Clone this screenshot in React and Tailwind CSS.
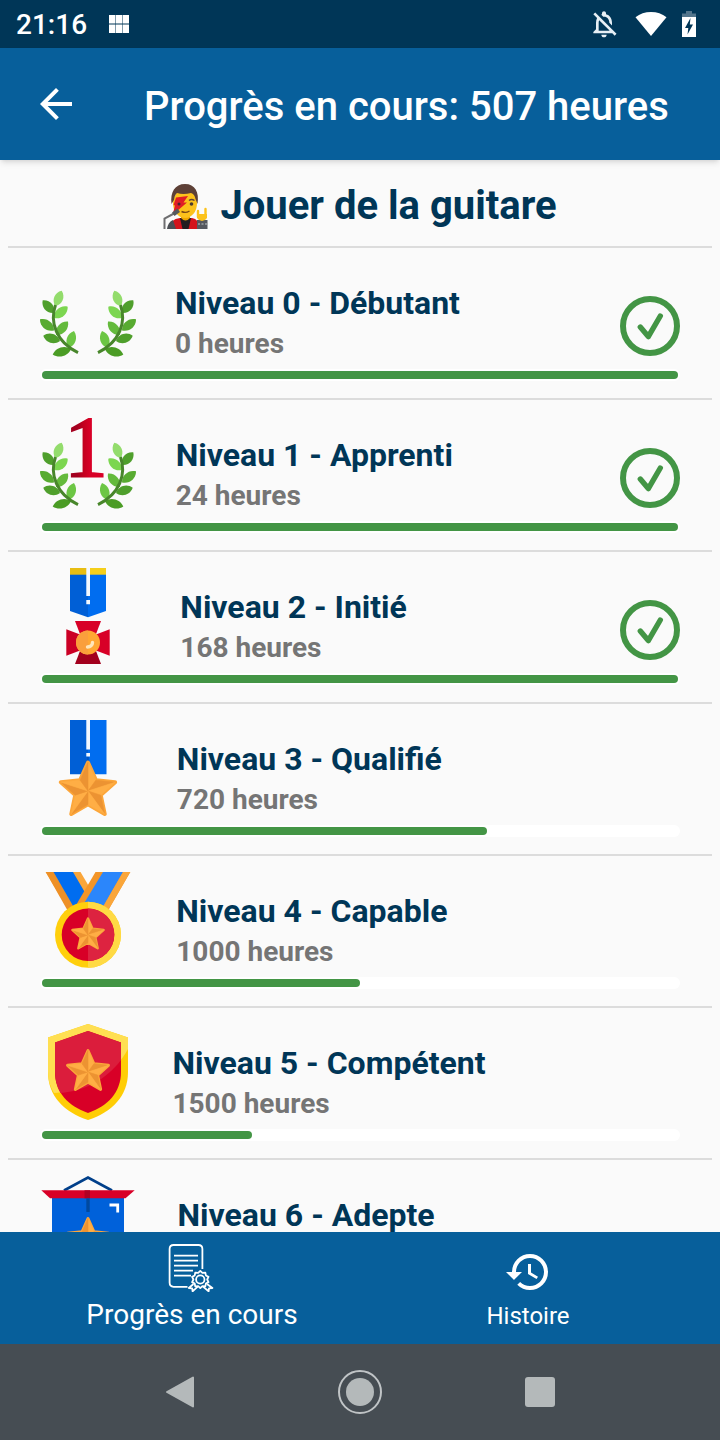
import React from "react";
import { MdArrowBack, MdHistory, MdOutlineNotificationsOff } from "react-icons/md";

const TOTAL_HOURS = 507;

const point = (cx, cy, radius, degrees) => {
  const a = ((degrees - 90) * Math.PI) / 180;
  return [cx + radius * Math.cos(a), cy + radius * Math.sin(a)];
};

function Star({ cx, cy, r }) {
  const pts = Array.from({ length: 10 }, (_, i) =>
    point(cx, cy, i % 2 === 0 ? r : r * 0.47, i * 36)
  );
  return (
    <g strokeLinejoin="round">
      <polygon points={pts.map((p) => p.join(",")).join(" ")} fill="#fca63a" stroke="#fca63a" strokeWidth={r * 0.14} />
      {pts.map((p, i) => {
        const q = pts[(i + 1) % 10];
        const color = i % 2 === 0 ? "#ffae45" : "#ec9332";
        return <polygon key={i} points={`${cx},${cy} ${p.join(",")} ${q.join(",")}`} fill={color} stroke={color} strokeWidth="0.6" />;
      })}
    </g>
  );
}

function Leaf({ base, tip, bulge = 6, color }) {
  const [bx, by] = base;
  const [tx, ty] = tip;
  const dx = tx - bx;
  const dy = ty - by;
  const len = Math.hypot(dx, dy);
  const nx = (-dy / len) * bulge;
  const ny = (dx / len) * bulge;
  const at = (t, s) => `${bx + dx * t + nx * s} ${by + dy * t + ny * s}`;
  return (
    <path
      d={`M${bx} ${by} C${at(0.25, 1)} ${at(0.75, 1)} ${tx} ${ty} C${at(0.75, -1)} ${at(0.25, -1)} ${bx} ${by}Z`}
      fill={color}
    />
  );
}

const LEAVES = [
  { tip: [21.7, 26.7], base: [15.3, 42], color: "#93dc6c" },
  { tip: [2.7, 36.3], base: [14, 49], color: "#4f9f2c" },
  { tip: [27.7, 42.7], base: [14, 54], color: "#7cd650" },
  { tip: [0, 55.3], base: [14, 66.5], color: "#58ab31" },
  { tip: [28, 57.5], base: [16, 71], color: "#64ba3c" },
  { tip: [3.3, 71.8], base: [20, 77], color: "#4f9f2c" },
  { tip: [34, 67], base: [28.5, 84], color: "#6cc644" },
  { tip: [12.7, 90.5], base: [31, 85], color: "#4b9c25" },
];

function Branch() {
  return (
    <g>
      {LEAVES.map((leaf, i) => (
        <Leaf key={i} {...leaf} />
      ))}
      <path d="M15.5 41 C9.5 58 16 78 38 88.7" fill="none" stroke="#48862b" strokeWidth="3" />
    </g>
  );
}

function Laurel() {
  return (
    <>
      <Branch />
      <g transform="translate(96 0) scale(-1 1)">
        <Branch />
      </g>
    </>
  );
}

function LaurelOne() {
  return (
    <>
      <Laurel />
      <defs>
        <linearGradient id="numeral" x1="0" x2="1" y1="0" y2="0">
          <stop offset="0.3" stopColor="#a4001f" />
          <stop offset="0.45" stopColor="#c4001f" />
          <stop offset="0.6" stopColor="#d80027" />
        </linearGradient>
      </defs>
      <text
        x="46"
        y="60"
        textAnchor="middle"
        fill="url(#numeral)"
        stroke="url(#numeral)"
        strokeWidth="2"
        className="font-['Liberation_Serif',serif] text-[87px]"
      >
        1
      </text>
    </>
  );
}

function CrossMedal() {
  return (
    <>
      <path d="M30 0H48V49.3L30 43Z" fill="#005fd6" />
      <path d="M48 0H66V43L48 49.3Z" fill="#006df0" />
      <path d="M30 0H48V6.7H30Z" fill="#e8bd12" />
      <path d="M48 0H66V6.7H48Z" fill="#f5cf1a" />
      <path d="M46.3 0H50V28H46.3ZM46.3 32H50V36.3H46.3Z" fill="#f3f8ff" />
      <path d="M35 53H61L54.5 70H41.5Z" fill="#d80027" />
      <path d="M26.3 61.3L44 68V81L26.3 87.7Z" fill="#cb0025" />
      <path d="M69.7 61.3L52 68V81L69.7 87.7Z" fill="#d80027" />
      <path d="M41.5 79H54.5L61 96H35Z" fill="#a2001d" />
      <circle cx="48" cy="74.5" r="12" fill="#ffa733" />
      <path d="M48 62.5a12 12 0 0 0 0 24Z" fill="#fa9f3c" />
      <path d="M52.5 74.5C52.5 77.2 50.3 79 47.5 79" fill="none" stroke="#ffe6ba" strokeWidth="3.4" strokeLinecap="round" />
    </>
  );
}

function StarMedal() {
  return (
    <>
      <path d="M30 0H48V54.3H30Z" fill="#005fd6" />
      <path d="M48 0H66.5V54.3H48Z" fill="#006df0" />
      <path d="M46.3 0H50V29.5H46.3ZM46.3 33H50V36.5H46.3Z" fill="#f3f8ff" />
      <path d="M48 37V44" stroke="#0053bd" strokeWidth="1.5" />
      <Star cx={48} cy={71} r={28.5} />
    </>
  );
}

function RibbonMedal() {
  return (
    <>
      <path d="M5.7 0H40.5L60 33L50 46H33Z" fill="#faa63a" />
      <path d="M5.7 0H13.5L36 38L29 41Z" fill="#ee9026" />
      <path d="M13.5 0H33L54 36L40 46Z" fill="#006df0" />
      <path d="M55.5 0H90.3L66 42L32 40Z" fill="#f39528" />
      <path d="M63 0H83L60 40L40 38Z" fill="#2b86fb" />
      <path d="M83 0H90.3L66 42L60 40Z" fill="#faa63a" />
      <circle cx="48" cy="62.7" r="33" fill="#ffcf0c" />
      <path d="M48 29.7a33 33 0 0 1 0 66Z" fill="#ffda44" />
      <circle cx="48" cy="62.7" r="26.3" fill="#d80027" />
      <path d="M48 36.4a26.3 26.3 0 0 1 0 52.6Z" fill="#dd2340" />
      <Star cx={48} cy={63} r={16.5} />
    </>
  );
}

function Shield() {
  return (
    <>
      <path d="M48 0L88 13.5V48C88 72 72 88 48 96C24 88 8 72 8 48V13.5Z" fill="#ffcd05" />
      <path d="M48 0L88 13.5V25C76 48 46 68 14 69Q8 60 8 48V13.5Z" fill="#ffdf52" />
      <path d="M48 7L81 18.5V48C81 68 68 82 48 89C28 82 15 68 15 48V18.5Z" fill="#d80027" />
      <path d="M48 7L81 18.5V36C66 56 44 67 20.5 69Q15 60 15 48V18.5Z" fill="#db1d3c" />
      <Star cx={48} cy={48} r={21.5} />
    </>
  );
}

function Banner() {
  return (
    <>
      <path d="M24 14.5L48 1.5L72 14.5" fill="none" stroke="#003f8a" strokeWidth="2.6" />
      <path d="M12 20H48V90L12 96Z" fill="#0061da" />
      <path d="M48 20H84V96L48 90Z" fill="#0061da" />
      <path d="M1.3 14.3H48V22.3H10Z" fill="#d80027" />
      <path d="M48 14.3H94.7L85.5 22.3H48Z" fill="#d80027" />
      <path d="M44.5 14.3H50V22.3H44.5Z" fill="#b00022" />
      <path d="M48 22.3V36" stroke="#00499f" strokeWidth="3.4" />
      <path d="M69.5 29H77.7V36.5" fill="none" stroke="#fff" strokeWidth="2.8" />
      <Star cx={48} cy={64} r={21.5} />
    </>
  );
}

const LEVELS = [
  { name: "Débutant", hours: 0, Badge: Laurel },
  { name: "Apprenti", hours: 24, Badge: LaurelOne },
  { name: "Initié", hours: 168, Badge: CrossMedal },
  { name: "Qualifié", hours: 720, Badge: StarMedal },
  { name: "Capable", hours: 1000, Badge: RibbonMedal },
  { name: "Compétent", hours: 1500, Badge: Shield },
  { name: "Adepte", hours: 2500, Badge: Banner },
];

function CheckIcon() {
  return (
    <svg viewBox="0 0 60 60" className="size-15" fill="none" stroke="#439545" role="img" aria-label="Terminé">
      <circle cx="30" cy="30" r="27" strokeWidth="6" />
      <path d="M20.3 31L28.3 40.6L40.3 20" strokeWidth="5.4" strokeLinecap="round" strokeLinejoin="round" />
    </svg>
  );
}

function LevelRow({ index, name, hours, Badge }) {
  const percent = hours <= TOTAL_HOURS ? 100 : Math.floor((TOTAL_HOURS / hours) * 100);
  return (
    <li className="border-b-2 border-[#dcdcdc] px-8 pt-4 pb-[17px]">
      <div className="flex items-end">
        <svg viewBox="0 0 96 96" className="mr-[23px] mb-[9px] size-24 shrink-0" aria-hidden="true">
          <Badge />
        </svg>
        <div className="grow" />
        <div className="mb-[5px] grow-[10]">
          <h2 className="text-[32px] leading-[41px] font-bold text-[#003657]">
            Niveau {index} - {name}
          </h2>
          <p className="text-[28px] leading-10 font-bold text-[#757575]">{hours} heures</p>
        </div>
        <div className="mb-[13px] w-15 shrink-0">{percent === 100 && <CheckIcon />}</div>
      </div>
      <div
        className="h-3 rounded-full bg-white p-[2px]"
        role="progressbar"
        aria-label={name}
        aria-valuenow={percent}
        aria-valuemin={0}
        aria-valuemax={100}
      >
        <div className="h-full rounded-full bg-[#439545]" style={{ width: `${percent}%` }} />
      </div>
    </li>
  );
}

function SingerEmoji() {
  return (
    <svg viewBox="0 0 45 45" className="size-[45px] shrink-0" role="img" aria-label="Chanteur">
      <path d="M6 45Q7 35 17 34H29Q36 35 37 45Z" fill="#d3141c" />
      <path d="M4 45Q5 38 10 36L13 45Z" fill="#4b4e54" />
      <path d="M17 34H28L25.5 45H19.5Z" fill="#231d20" />
      <path d="M18 30H27V34Q22.500 39 18 34Z" fill="#eda600" />
      <ellipse cx="22" cy="19.500" rx="12" ry="14.500" fill="#fcc21b" />
      <path d="M8.500 20C7 8 12 0 22 0S36.500 8 34.500 20L32.500 15Q31.500 10 28 9Q20 11 14 9Q11.500 11 11 16Z" fill="#5d4037" />
      <path d="M13 13.500L25 12L20.500 18.500H24L9.500 31L12 21.500L10.500 21Z" fill="#e01e26" />
      <path d="M26 16.500Q28.500 14.500 31.500 16.500" fill="none" stroke="#5d4037" strokeWidth="1.400" />
      <circle cx="28.500" cy="20" r="1.800" fill="#4a3b32" />
      <circle cx="16" cy="20" r="1.500" fill="#4a2530" />
      <path d="M18.500 27.500Q22.500 29.500 26.500 27" fill="none" stroke="#7a4a17" strokeWidth="1.400" />
      <path d="M1.500 45V34.500L11 29.500" fill="none" stroke="#6e6e70" strokeWidth="2" />
      <path d="M9 28.500L14.500 24.500L17 28L11.500 32Z" fill="#55585c" />
      <path d="M34 45V36H44.500V45Z" fill="#55585f" />
      <path d="M35 40H44.500" stroke="#9da1a5" strokeWidth="1.500" strokeDasharray="2 1.500" />
      <path d="M35 27V32H42.500V25" fill="none" stroke="#fcc21b" strokeWidth="2.400" strokeLinecap="round" />
      <path d="M34 30H44V34Q42 37 39 37T34 34Z" fill="#fcc21b" />
    </svg>
  );
}

function CertificateIcon() {
  const scallop = Array.from({ length: 20 }, (_, i) => point(32.3, 35.5, i % 2 ? 6.9 : 8.6, i * 18).join(",")).join(" ");
  return (
    <svg viewBox="0 0 48 48" className="size-12" fill="none" stroke="#fff" strokeWidth="1.8" aria-hidden="true">
      <path d="M34.400 25V5Q34.400 1 30.400 1H5.600Q1.600 1 1.600 5V38.600Q1.600 42.800 5.600 42.800H19.500" />
      <path d="M6 11.700H30M6 16.700H30M6 21.700H30M6 26.700H25M6 31.700H23" />
      <polygon points={scallop} strokeLinejoin="round" />
      <circle cx="32.300" cy="35.500" r="4.200" />
      <path d="M25.500 40L20.800 44L24.200 44.300L24.600 47.300L29.700 42.600M39 40L44.400 44L41 44.300L40.600 47.300L35 42.600" strokeLinejoin="round" />
    </svg>
  );
}

function StatusBar() {
  return (
    <div className="flex h-12 shrink-0 items-center bg-[#003657] px-4 text-white">
      <time className="pt-[2px] text-[28px] leading-[46px] font-medium">21:16</time>
      <svg viewBox="0 0 20 18" className="ml-[22px] h-[18px] w-5" fill="#fff" aria-hidden="true">
        <path d="M0 0H6.500V8.500H0ZM7 0H13V8.500H7ZM13.500 0H20V8.500H13.500ZM0 9.500H6.500V18H0ZM7 9.500H13V18H7ZM13.500 9.500H20V18H13.500Z" />
      </svg>
      <div className="ml-auto flex items-center gap-[15px] pr-2">
        <MdOutlineNotificationsOff className="size-8 text-[#e6eff5]" />
        <svg viewBox="0 0 32 24" className="h-6 w-8" fill="#fff" aria-hidden="true">
          <path d="M16 24L0.500 5.200Q7 0 16 0T31.500 5.200Z" />
        </svg>
        <svg viewBox="0 0 14 26" className="h-[26px] w-[14px]" aria-hidden="true">
          <path d="M0 6V2.500H4V0H10V2.500H14V6Z" fill="#52758c" />
          <path d="M0 6H14V26H0Z" fill="#fff" />
          <path d="M8.500 7L3 17H6.300L5.500 23.500L11 13.500H7.800Z" fill="#003657" />
        </svg>
      </div>
    </div>
  );
}

export default function App() {
  return (
    <div className="flex h-screen flex-col bg-[#fafafa] font-['Roboto',sans-serif]">
      <StatusBar />
      <header className="z-10 flex h-28 shrink-0 items-center bg-[#075f9b] pl-8 text-white shadow-md">
        <button type="button" aria-label="Retour" className="size-12">
          <MdArrowBack className="size-12" />
        </button>
        <h1 className="ml-16 pt-[6px] text-[40px] leading-12 font-medium whitespace-nowrap">
          Progrès en cours: {TOTAL_HOURS} heures
        </h1>
      </header>

      <main className="min-h-0 flex-1 overflow-y-auto px-2 [scrollbar-width:none]">
        <div className="flex items-center justify-center gap-3 border-b-2 border-[#dcdcdc] pt-[22px] pb-4">
          <SingerEmoji />
          <h2 className="text-[40px] leading-12 font-bold text-[#003657]">Jouer de la guitare</h2>
        </div>
        <ul>
          {LEVELS.map((level, i) => (
            <LevelRow key={level.name} index={i} {...level} />
          ))}
        </ul>
      </main>

      <nav className="flex h-28 shrink-0 bg-[#075f9b] px-6 text-white">
        <a href="#progres" aria-current="page" className="flex flex-1 flex-col items-center pt-3">
          <CertificateIcon />
          <span className="mt-1 text-[28px] leading-[38px]">Progrès en cours</span>
        </a>
        <a href="#histoire" className="flex flex-1 flex-col items-center pt-4">
          <MdHistory className="size-12" />
          <span className="mt-1 text-[24px] leading-8">Histoire</span>
        </a>
      </nav>

      <div className="grid h-24 shrink-0 grid-cols-3 place-items-center bg-[#464d53] px-[90px]">
        <button type="button" aria-label="Précédent">
          <svg viewBox="0 0 32 32" className="size-8" aria-hidden="true">
            <path d="M3 16L29 1.500V30.500Z" fill="#b4b9ba" stroke="#b4b9ba" strokeWidth="2" strokeLinejoin="round" />
          </svg>
        </button>
        <button type="button" aria-label="Accueil">
          <svg viewBox="0 0 44 44" className="size-11" aria-hidden="true">
            <circle cx="22" cy="22" r="21" fill="none" stroke="#c0c4c6" strokeWidth="2" />
            <circle cx="22" cy="22" r="14" fill="#b4b9ba" />
          </svg>
        </button>
        <button type="button" aria-label="Applications récentes" className="size-[30px] rounded-[3px] bg-[#b4b9ba]" />
      </div>
    </div>
  );
}
